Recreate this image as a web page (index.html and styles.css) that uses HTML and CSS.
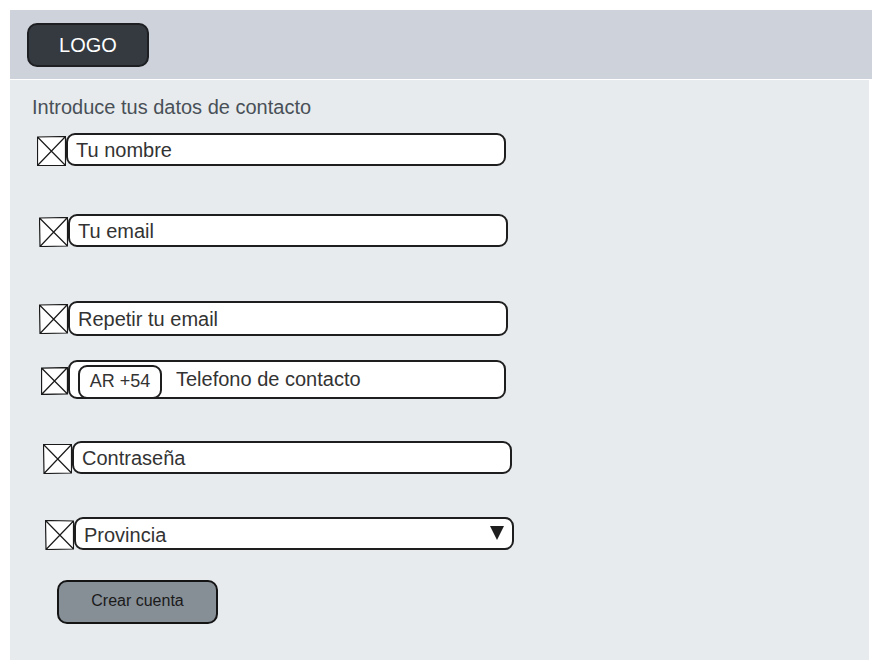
FILE: index.html
```html
<!DOCTYPE html>
<html lang="es">
<head>
<meta charset="utf-8">
<meta name="viewport" content="width=device-width, initial-scale=1">
<title>Crear cuenta</title>
<link rel="stylesheet" href="styles.css">
</head>
<body>
<header class="topbar">
  <a class="logo" href="#">LOGO</a>
</header>
<main class="panel">
  <h1 class="title">Introduce tus datos de contacto</h1>
  <form class="form">
    <div class="row row-name">
      <label class="icon" for="nombre"><svg viewBox="0 0 29 30"><path d="M.5 1 28.500.5 28.500 29.500.5 29.500ZL28.500 29.500M28.500.5.5 29.500"/></svg></label>
      <input class="field" id="nombre" type="text" placeholder="Tu nombre" aria-label="Tu nombre">
    </div>
    <div class="row row-email">
      <label class="icon" for="email"><svg viewBox="0 0 29 30"><path d="M.5 1 28.500.5 28.500 29 1 29.500ZL28.500 29M28.500.5 1 29.500"/></svg></label>
      <input class="field" id="email" type="email" placeholder="Tu email" aria-label="Tu email">
    </div>
    <div class="row row-repeat">
      <label class="icon" for="email2"><svg viewBox="0 0 29 30"><path d="M.5 1 28.500.5 28.500 29 1 29.500ZL28.500 29M28.500.5 1 29.500"/></svg></label>
      <input class="field field-mid" id="email2" type="email" placeholder="Repetir tu email" aria-label="Repetir tu email">
    </div>
    <div class="row row-phone">
      <label class="icon icon-small" for="telefono"><svg viewBox="0 0 26 27"><path d="M.5 1 25.500.5 25.500 26 .5 26.500ZL25.500 26M25.500.5.5 26.500"/></svg></label>
      <div class="field phone">
        <button class="prefix" type="button">AR +54</button>
        <input class="phone-input" id="telefono" type="tel" placeholder="Telefono de contacto" aria-label="Telefono de contacto">
      </div>
    </div>
    <div class="row row-password">
      <label class="icon" for="clave"><svg viewBox="0 0 29 30"><path d="M.5.5 28.500.5 28.500 29 1 29.500ZL28.500 29M28.500.5 1 29.500"/></svg></label>
      <input class="field" id="clave" type="password" placeholder="Contraseña" aria-label="Contraseña">
    </div>
    <div class="row row-province">
      <label class="icon" for="provincia"><svg viewBox="0 0 29 30"><path d="M.5.5 28.500 1 28.500 29 1 29.500ZL28.500 29M28.500 1 1 29.500"/></svg></label>
      <div class="select-wrap">
        <select class="field select" id="provincia" aria-label="Provincia"><option>Provincia</option></select>
        <svg class="arrow" viewBox="0 0 14 14"><path d="M0 0H14L7 14Z"/></svg>
      </div>
    </div>
    <button class="submit" type="submit">Crear cuenta</button>
  </form>
</main>
</body>
</html>
```
FILE: styles.css
```css
* {
  box-sizing: border-box;
}

body {
  margin: 0;
  padding: 10px;
  background: #fff;
  color: #333;
  font-family: "Liberation Sans", Arial, sans-serif;
  font-size: 20px;
}

input,
select,
button {
  margin: 0;
  font: inherit;
  color: inherit;
}

.topbar {
  display: flex;
  padding: 13px 17px 12px;
  background: #ced2db;
}

.logo {
  width: 122px;
  height: 44px;
  border: 2px solid #1e1f22;
  border-radius: 10px;
  background: #343a40;
  color: #fff;
  line-height: 40px;
  text-align: center;
  text-decoration: none;
}

.panel {
  min-height: calc(100vh - 88px);
  margin: 0 3px 0 0;
  border-top: 1px solid #fff;
  padding: 15px 22px 36px;
  background: #e7ebee;
}

.title {
  margin: 0;
  color: #495057;
  font-size: 20px;
  font-weight: 400;
  line-height: 24px;
}

.form {
  display: flex;
  flex-direction: column;
  align-items: flex-start;
  padding: 14px 0 0 5px;
}

.row {
  display: flex;
  align-items: flex-start;
  width: 100%;
  max-width: 469px;
}

.row-name {
  margin-bottom: 48px;
}

.row-email {
  margin: 0 0 54px 2px;
}

.row-repeat {
  margin: 0 0 24px 2px;
}

.row-phone {
  max-width: 465px;
  margin: 0 0 42px 4px;
}

.row-password {
  margin: 0 0 43px 6px;
}

.row-province {
  margin: 0 0 30px 8px;
}

.icon {
  flex: none;
  width: 29px;
  height: 30px;
  margin-top: 3px;
}

.icon-small {
  width: 27px;
  height: 28px;
  margin-top: 7px;
}

.icon svg {
  display: block;
  width: 100%;
  height: 100%;
  fill: #fff;
  stroke: #1a1a1a;
  stroke-width: 1.2;
}

.field {
  flex: 1;
  min-width: 0;
  height: 33px;
  border: 2px solid #1e1e1e;
  border-radius: 9px;
  padding: 2px 8px 0;
  background: #fff;
}

.field-mid {
  height: 35px;
}

input::placeholder {
  color: #333;
  opacity: 1;
}

.phone {
  display: flex;
  height: 39px;
  padding-top: 3px;
}

.prefix {
  flex: none;
  width: 84px;
  height: 34px;
  border: 2px solid #1e1e1e;
  border-radius: 9px;
  padding: 0 0 2px;
  background: #fff;
  font-size: 18px;
}

.phone-input {
  flex: 1;
  min-width: 0;
  height: 28px;
  border: 0;
  padding: 0 14px;
  background: none;
}

.select-wrap {
  position: relative;
  display: flex;
  flex: 1;
  min-width: 0;
}

.select {
  appearance: none;
}

.arrow {
  position: absolute;
  top: 9px;
  right: 10px;
  width: 14px;
  height: 14px;
  fill: #1e1e1e;
  pointer-events: none;
}

.submit {
  width: 161px;
  height: 44px;
  margin-left: 20px;
  border: 2px solid #141414;
  border-radius: 10px;
  padding: 0 0 2px;
  background: #868e96;
  color: #1a1a1a;
  font-size: 16px;
}
```
